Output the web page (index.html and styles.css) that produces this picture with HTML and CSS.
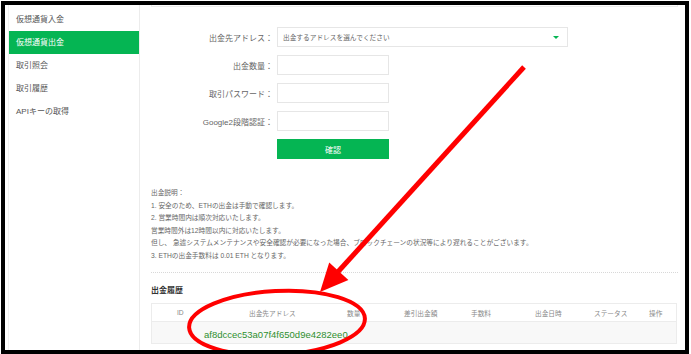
FILE: index.html
```html
<!DOCTYPE html>
<html lang="ja">

<head>
    <meta charset="UTF-8">
    <meta name="viewport" content="width=device-width, initial-scale=1.0">
    <title>仮想通貨出金</title>
    <link rel="stylesheet" href="styles.css">
</head>

<body>
    <div class="frame">
        <!-- サイドメニュー -->
        <aside class="sidebar">
            <a class="menu-item">仮想通貨入金</a>
            <a class="menu-item active">仮想通貨出金</a>
            <a class="menu-item">取引照会</a>
            <a class="menu-item">取引履歴</a>
            <a class="menu-item">APIキーの取得</a>
        </aside>

        <main class="content">
            <div class="panel-edge"></div>

            <!-- 出金フォーム -->
            <form class="withdraw-form">
                <label class="field-label">出金先アドレス：</label>
                <div class="select-box">
                    <span>出金するアドレスを選んでください</span>
                    <span class="caret"></span>
                </div>

                <label class="field-label">出金数量：</label>
                <input class="text-input" type="text">

                <label class="field-label">取引パスワード：</label>
                <input class="text-input" type="password">

                <label class="field-label">Google2段階認証：</label>
                <input class="text-input" type="text">

                <button class="submit-button" type="button">確認</button>
            </form>

            <!-- 説明 -->
            <div class="notes">
                <p>出金説明：</p>
                <p>1. 安全のため、ETHの出金は手動で確認します。</p>
                <p>2. 営業時間内は順次対応いたします。</p>
                <p>営業時間外は12時間以内に対応いたします。</p>
                <p>但し、 急遽システムメンテナンスや安全確認が必要になった場合、ブロックチェーンの状況等により遅れることがございます。</p>
                <p>3. ETHの出金手数料は 0.01 ETH となります。</p>
            </div>

            <div class="divider"></div>

            <h2 class="section-title">出金履歴</h2>

            <div class="history">
                <div class="history-head">
                    <span>ID</span>
                    <span>出金先アドレス</span>
                    <span>数量</span>
                    <span>差引出金額</span>
                    <span>手数料</span>
                    <span>出金日時</span>
                    <span>ステータス</span>
                    <span>操作</span>
                </div>
                <div class="history-row">
                    <span class="address">af8dccec53a07f4f650d9e4282ee0</span>
                </div>
            </div>
        </main>

        <!-- 赤い矢印と丸の注釈 -->
        <svg class="annotation" width="680" height="345" viewBox="5 5 680 345">
            <line x1="524" y1="67" x2="336" y2="274" stroke="#ff0000" stroke-width="5" />
            <polygon points="320,292 348.4,280 329.2,262.6" fill="#ff0000" />
            <ellipse cx="277" cy="323" rx="88" ry="32" transform="rotate(-3 277 323)" fill="none" stroke="#ff0000" stroke-width="4" />
        </svg>
    </div>
</body>

</html>
```

FILE: styles.css
```css
/* リセット */
* {
    margin: 0;
    padding: 0;
    box-sizing: border-box;
}

body {
    font-family: 'Liberation Sans', 'Noto Sans CJK JP', sans-serif;
    background: #fff;
    color: #555;
}

/* 黒い枠 */
.frame {
    position: relative;
    display: flex;
    width: 688px;
    height: 353px;
    margin: 1px 0 0 1px;
    border: 4px solid #000;
    background: #fff;
    overflow: hidden;
}

/* サイドメニュー */
.sidebar {
    width: 132px;
    margin-left: 3px;
    padding-top: 3px;
    border-left: 1px solid #f0f0f0;
    border-right: 1px solid #ececec;
    display: flex;
    flex-direction: column;
}

.menu-item {
    display: block;
    height: 23px;
    line-height: 23px;
    padding-left: 7px;
    font-size: 8px;
    color: #555;
}

.menu-item.active {
    background: #05b553;
    color: #fff;
}

/* メイン */
.content {
    flex: 1;
    padding: 0 7px 0 11px;
}

.panel-edge {
    height: 2px;
    border: 1px solid #ececec;
    border-top: none;
}

/* フォーム */
.withdraw-form {
    display: grid;
    grid-template-columns: 122px auto;
    column-gap: 4px;
    row-gap: 8px;
    align-items: center;
    margin-top: 20px;
}

.field-label {
    text-align: right;
    font-size: 8px;
    color: #666;
}

.select-box {
    width: 291px;
    height: 20px;
    border: 1px solid #e6e6e6;
    display: flex;
    align-items: center;
    justify-content: space-between;
    padding: 0 8px 0 5px;
    font-size: 6.7px;
    color: #666;
}

.caret {
    width: 0;
    height: 0;
    border-left: 3px solid transparent;
    border-right: 3px solid transparent;
    border-top: 3px solid #05b553;
}

.text-input {
    width: 112px;
    height: 20px;
    border: 1px solid #e6e6e6;
    outline: none;
}

.submit-button {
    grid-column: 2;
    width: 112px;
    height: 20px;
    border: none;
    background: #05b553;
    color: #fff;
    font-family: inherit;
    font-size: 8px;
}

/* 説明 */
.notes {
    margin-top: 28px;
    font-size: 6.7px;
    line-height: 12.5px;
    color: #666;
}

.divider {
    margin-top: 10px;
    border-top: 1px dotted #d8d8d8;
}

.section-title {
    margin-top: 13px;
    font-size: 8px;
    line-height: 10px;
    font-weight: 700;
    color: #333;
}

/* 出金履歴テーブル */
.history {
    margin-top: 7px;
    width: 526px;
    border: 1px solid #ececec;
}

.history-head {
    display: grid;
    grid-template-columns: 72px 98px 57px 67px 64px 59px 55px auto;
    height: 17px;
    align-items: center;
    padding-left: 25px;
    font-size: 6.7px;
    color: #888;
}

.history-row {
    height: 22px;
    border-top: 1px solid #ececec;
    background: #f8f8f8;
    padding: 2px 0 0 52px;
}

.address {
    font-size: 9.5px;
    line-height: 12px;
    color: #2f8f2f;
}

/* 注釈 */
.annotation {
    position: absolute;
    top: 0;
    left: 0;
    pointer-events: none;
}
```
